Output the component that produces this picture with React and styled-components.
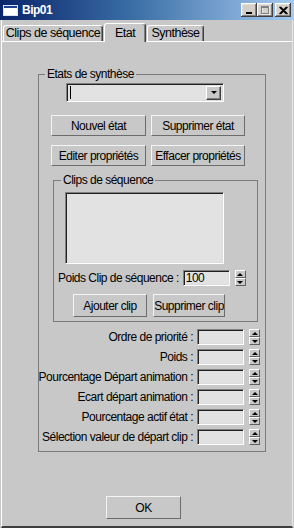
import React from 'react';
import styled, { createGlobalStyle } from 'styled-components';

const FONT = `"Liberation Sans", Arial, sans-serif`;
const FACE = '#c8c8c8';
const FIELD = '#e2e2e2';

const Global = createGlobalStyle`
  html, body { margin: 0; padding: 0; background: ${FACE}; }
  body { font-family: ${FONT}; font-size: 12px; letter-spacing: -0.5px; color: #000; }
  * { box-sizing: border-box; }
`;

const Window = styled.div`
  width: 294px;
  height: 528px;
  display: flex;
  flex-direction: column;
  background: ${FACE};
  overflow: hidden;
`;

const TitleBar = styled.div`
  height: 20px;
  flex: none;
  display: flex;
  align-items: center;
  padding: 0 3px;
  background: linear-gradient(90deg, #0a246a 0%, #3a6ea5 45%, #a6caf0 100%);
`;

const TitleText = styled.span`
  font-family: "Liberation Sans", Arial, sans-serif;
  font-weight: bold;
  font-size: 12px;
  letter-spacing: -0.5px;
  color: #fff;
  margin-left: 4px;
  flex: 1;
`;

const CapButtons = styled.div`
  display: flex;
  align-items: center;
`;

const CapButton = styled.div`
  width: 16px;
  height: 14px;
  margin-left: ${p => p.$gap || 0}px;
  background: #d4d0c8;
  box-shadow: inset -1px -1px #404040, inset 1px 1px #fff, inset -2px -2px #808080, inset 2px 2px #dfdfdf;
  display: flex;
  align-items: center;
  justify-content: center;
`;

const Body = styled.div`
  flex: 1;
  display: flex;
  flex-direction: column;
  margin: 0 1px;
  border-left: 1px solid #fff;
  border-right: 1px solid #e6e6e6;
  border-bottom: 2px solid #404040;
`;

const TabStrip = styled.div`
  height: 22px;
  flex: none;
  display: flex;
  align-items: flex-end;
  padding-left: 1px;
  border-bottom: 1px solid #fff;
`;

const Tab = styled.div`
  position: relative;
  width: ${p => p.$w}px;
  height: ${p => (p.$active ? 19 : 16)}px;
  margin-bottom: ${p => (p.$active ? -1 : 0)}px;
  margin-right: 1px;
  padding-top: ${p => (p.$active ? 2 : 0)}px;
  text-align: center;
  font-size: 12.5px;
  background: ${FACE};
  border-top: 1px solid #fff;
  border-left: 1px solid #fff;
  border-right: 1px solid #404040;
  box-shadow: inset -1px 0 #808080;
  border-radius: 3px 3px 0 0;
  line-height: 15px;
  white-space: nowrap;
  z-index: ${p => (p.$active ? 1 : 0)};
`;

const Panel = styled.div`
  flex: 1;
  display: flex;
  flex-direction: column;
  padding: 25px 0 0 36px;
`;

const Group = styled.fieldset`
  margin: ${p => p.$margin || 0};
  padding: 0;
  width: ${p => p.$width}px;
  border: 1px solid #7c7c7c;
  min-width: 0;
`;

const Legend = styled.legend`
  margin-left: ${p => p.$indent}px;
  padding: 0 2px;
  line-height: 14px;
  font-size: 12px;
`;

const Column = styled.div`
  display: flex;
  flex-direction: column;
  align-items: flex-start;
  padding: ${p => p.$pad};
`;

const Sunken = styled.div`
  position: relative;
  background: ${FIELD};
  border: 1px solid;
  border-color: #808080 #fff #fff #808080;
  box-shadow: inset 1px 1px #202020, inset -1px -1px #dcdcdc;
`;

const Combo = styled(Sunken)`
  margin: 2px 0 0 27px;
  width: 158px;
  height: 19px;
  display: flex;
  align-items: center;
  justify-content: space-between;
  padding: 0 2px 0 3px;
`;

const Caret = styled.span`
  width: 1px;
  height: 13px;
  background: #000;
`;

const ComboArrow = styled.div`
  width: 15px;
  height: 14px;
  background: ${FACE};
  border: 1px solid;
  border-color: #fff #404040 #404040 #fff;
  box-shadow: inset -1px -1px #808080;
  display: flex;
  align-items: center;
  justify-content: center;
`;

const TriDown = styled.span`
  width: 0;
  height: 0;
  border-left: 3px solid transparent;
  border-right: 3px solid transparent;
  border-top: 3px solid #000;
`;

const TriUp = styled.span`
  width: 0;
  height: 0;
  border-left: 3px solid transparent;
  border-right: 3px solid transparent;
  border-bottom: 3px solid #000;
`;

const ButtonGrid = styled.div`
  display: grid;
  grid-template-columns: ${p => p.$cols};
  column-gap: ${p => p.$colGap}px;
  row-gap: 9px;
  margin: ${p => p.$margin};
`;

const Button = styled.button`
  font-family: ${FONT};
  font-size: 12px;
  letter-spacing: -0.5px;
  color: #000;
  height: ${p => p.$h || 21}px;
  width: ${p => (p.$w ? `${p.$w}px` : 'auto')};
  padding: 0;
  background: ${FACE};
  border: 1px solid;
  border-color: #f4f4f4 #6c6c6c #6c6c6c #f4f4f4;
  border-radius: 0;
  white-space: nowrap;
  overflow: hidden;
`;

const ListBox = styled(Sunken)`
  margin: 5px 0 0 11px;
  width: 159px;
  height: 72px;
`;

const ValueRow = styled.div`
  display: flex;
  align-items: center;
  height: 16px;
  margin: ${p => p.$margin || 0};
  justify-content: ${p => p.$justify || 'flex-start'};
  width: 100%;
`;

const Label = styled.span`
  white-space: nowrap;
  line-height: 16px;
`;

const NumField = styled(Sunken)`
  flex: none;
  width: ${p => p.$w}px;
  height: 16px;
  margin-left: 4px;
  display: flex;
  align-items: center;
  padding-left: 2px;
  line-height: 13px;
`;

const Spinner = styled.div`
  flex: none;
  width: 11px;
  height: 16px;
  margin-left: 5px;
  display: flex;
  flex-direction: column;
`;

const SpinHalf = styled.div`
  flex: 1;
  background: ${FACE};
  border: 1px solid;
  border-color: #fff #606060 #606060 #fff;
  display: flex;
  align-items: center;
  justify-content: center;
`;

const Rows = styled.div`
  display: flex;
  flex-direction: column;
  gap: 4px;
  width: 100%;
  margin-top: 7px;
  padding-right: 5px;
`;

const Footer = styled.div`
  margin-top: auto;
  padding: 0 0 7px 104px;
`;

const Spin = () => (
  <Spinner>
    <SpinHalf><TriUp /></SpinHalf>
    <SpinHalf><TriDown /></SpinHalf>
  </Spinner>
);

const rows = [
  'Ordre de priorité :',
  'Poids :',
  'Pourcentage Départ animation :',
  'Ecart départ animation :',
  'Pourcentage actif état :',
  'Sélection valeur de départ clip :',
];

export default function App() {
  return (
    <>
      <Global />
      <Window>
        <TitleBar>
          <svg width="15" height="11" viewBox="0 0 15 11">
            <rect x="0" y="0" width="15" height="11" fill="#fff" />
            <rect x="1" y="1" width="13" height="2" fill="#1c3f94" />
            <rect x="0.5" y="0.5" width="14" height="10" fill="none" stroke="#d8e4f8" />
          </svg>
          <TitleText>Bip01</TitleText>
          <CapButtons>
            <CapButton>
              <svg width="10" height="9" viewBox="0 0 10 9"><rect x="2" y="6" width="6" height="2" fill="#000" /></svg>
            </CapButton>
            <CapButton>
              <svg width="10" height="9" viewBox="0 0 10 9">
                <rect x="2" y="1" width="8" height="8" fill="none" stroke="#fff" />
                <rect x="1.5" y="0.5" width="7" height="7" fill="none" stroke="#808080" />
                <rect x="1.5" y="1" width="7" height="1" fill="#808080" />
              </svg>
            </CapButton>
            <CapButton $gap={2}>
              <svg width="10" height="9" viewBox="0 0 10 9">
                <path d="M1.5 1 L8.5 8 M8.5 1 L1.5 8 M2.5 1 L9.5 8 M9.5 1 L2.5 8" stroke="#000" strokeWidth="1.2" />
              </svg>
            </CapButton>
          </CapButtons>
        </TitleBar>
        <Body>
          <TabStrip>
            <Tab $w={100}>Clips de séquence</Tab>
            <Tab $w={42} $active>Etat</Tab>
            <Tab $w={57}>Synthèse</Tab>
          </TabStrip>
          <Panel>
            <Group $width={228}>
              <Legend $indent={6}>Etats de synthèse</Legend>
              <Column $pad="0 0 6px 0">
                <Combo>
                  <Caret />
                  <ComboArrow><TriDown /></ComboArrow>
                </Combo>
                <ButtonGrid $cols="95px 94px" $colGap={5} $margin="13px 0 0 12px">
                  <Button>Nouvel état</Button>
                  <Button>Supprimer état</Button>
                  <Button>Editer propriétés</Button>
                  <Button>Effacer propriétés</Button>
                </ButtonGrid>
                <Group $width={205} $margin="7px 0 0 14px">
                  <Legend $indent={7}>Clips de séquence</Legend>
                  <Column $pad="0 0 4px 0">
                    <ListBox />
                    <ValueRow $margin="6px 0 0 4px">
                      <Label>Poids Clip de séquence :</Label>
                      <NumField $w={47}>100</NumField>
                      <Spin />
                    </ValueRow>
                    <ButtonGrid $cols="74px 72px" $colGap={6} $margin="8px 0 0 19px">
                      <Button $h={23}>Ajouter clip</Button>
                      <Button $h={23}>Supprimer clip</Button>
                    </ButtonGrid>
                  </Column>
                </Group>
                <Rows>
                  {rows.map(r => (
                    <ValueRow key={r} $justify="flex-end">
                      <Label>{r}</Label>
                      <NumField $w={47} />
                      <Spin />
                    </ValueRow>
                  ))}
                </Rows>
              </Column>
            </Group>
          </Panel>
          <Footer>
            <Button $w={75} $h={23}>OK</Button>
          </Footer>
        </Body>
      </Window>
    </>
  );
}
